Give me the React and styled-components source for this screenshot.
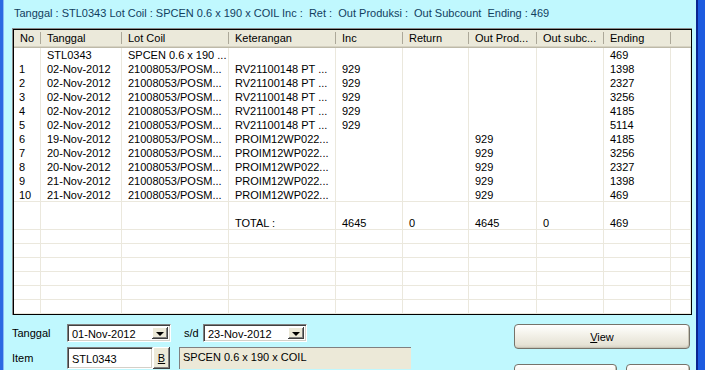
import React from "react";
import styled, { createGlobalStyle } from "styled-components";

const Global = createGlobalStyle`
  html, body { margin: 0; padding: 0; overflow: hidden; }
  body { font-family: "Liberation Sans", Arial, sans-serif; font-size: 11px; }
`;

const Window = styled.div`
  display: flex;
  width: 705px;
  height: 370px;
  overflow: hidden;
  background: #c0f8fe;
`;

const LeftFrame = styled.div`
  width: 3px;
  background: #2c68e2;
  border-right: 1px solid #8ab8f4;
`;

const RightFrame = styled.div`
  width: 7px;
  background: #1d5be0;
  border-left: 2px solid #0a2590;
`;

const Content = styled.div`
  flex: 1;
  display: flex;
  flex-direction: column;
  padding: 6px 4px 0 8px;
  min-width: 0;
`;

const Title = styled.div`
  height: 14px;
  line-height: 14px;
  color: #12405e;
  white-space: pre;
  padding-left: 2px;
`;

const GridFrame = styled.div`
  margin-top: 8px;
  height: 286px;
  flex: none;
  border-top: 1px solid #8c8c8c;
  border-left: 1px solid #8c8c8c;
  display: flex;
`;

const Grid = styled.div`
  flex: 1;
  border: 1px solid #000;
  background: #fff;
  display: flex;
  flex-direction: column;
  overflow: hidden;
`;

const cols = "27px 81px 107px 107px 67px 66px 68px 67px 67px 1fr";

const HeaderRow = styled.div`
  display: grid;
  grid-template-columns: ${cols};
  height: 16px;
  flex: none;
  background: #ebe9da;
  border-bottom: 1px solid #d6d2c2;
  box-shadow: 0 1px 0 #bdb9a8;
  margin-bottom: 1px;
`;

const HeaderCell = styled.div`
  position: relative;
  padding-left: 6px;
  line-height: 16px;
  color: #000;
  white-space: nowrap;
  overflow: hidden;
  &::after {
    content: "";
    position: absolute;
    right: 0;
    top: 2px;
    bottom: 2px;
    width: 1px;
    background: #aca899;
    box-shadow: 1px 0 0 #fff;
    display: ${(p) => (p.$last ? "none" : "block")};
  }
`;

const Row = styled.div`
  display: grid;
  flex: none;
  grid-template-columns: ${cols};
  height: ${(p) => (p.$line ? 13 : 14)}px;
  border-bottom: ${(p) => (p.$line ? "1px solid #ebe8dd" : "none")};
`;

const Cell = styled.div`
  border-right: 1px solid #ebe8dd;
  padding-left: ${(p) => (p.$first ? 5 : 6)}px;
  line-height: 14px;
  color: #000;
  white-space: nowrap;
  overflow: hidden;
`;

const Form = styled.div`
  display: flex;
  justify-content: space-between;
  align-items: flex-start;
  margin-top: 9px;
  padding-right: 2px;
`;

const FormLeft = styled.div`
  display: flex;
  flex-direction: column;
  gap: 5px;
`;

const FormRow = styled.div`
  display: flex;
  align-items: center;
  height: ${(p) => p.$h}px;
`;

const Label = styled.div`
  width: ${(p) => p.$w}px;
  color: #000;
  padding-left: ${(p) => p.$pl || 0}px;
  box-sizing: border-box;
`;

const sunken = `
  box-sizing: border-box;
  border-top: 1px solid #808080;
  border-left: 1px solid #808080;
  border-right: 1px solid #ffffff;
  border-bottom: 1px solid #ffffff;
  box-shadow: inset 1px 1px 0 #404040, inset -1px -1px 0 #d4d0c8;
`;

const Combo = styled.div`
  ${sunken}
  width: 104px;
  height: 18px;
  background: #fff;
  display: flex;
  align-items: stretch;
  padding: 2px;
`;

const ComboText = styled.div`
  flex: 1;
  line-height: 14px;
  padding-left: 2px;
  color: #000;
`;

const DropBtn = styled.div`
  width: 16px;
  background: #ece9d8;
  box-shadow: inset -1px -1px 0 #404040, inset 1px 1px 0 #fff, inset -2px -2px 0 #808080;
  display: flex;
  align-items: center;
  justify-content: center;
  &::before {
    content: "";
    border-left: 4px solid transparent;
    border-right: 4px solid transparent;
    border-top: 4px solid #000;
    margin-top: 1px;
  }
`;

const TextBox = styled.div`
  ${sunken}
  width: 86px;
  height: 22px;
  background: #fff;
  padding: 4px 0 0 4px;
  color: #000;
  line-height: 14px;
`;

const SmallBtn = styled.div`
  box-sizing: border-box;
  width: 17px;
  height: 22px;
  background: #ece9d8;
  box-shadow: inset -1px -1px 0 #404040, inset 1px 1px 0 #fff, inset -2px -2px 0 #808080;
  display: flex;
  align-items: center;
  justify-content: center;
  color: #000;
  text-decoration: underline;
`;

const DescBox = styled.div`
  box-sizing: border-box;
  margin-left: 9px;
  width: 232px;
  height: 22px;
  background: #ece9d8;
  border-top: 1px solid #808080;
  border-left: 1px solid #808080;
  padding: 2px 0 0 3px;
  color: #000;
  line-height: 14px;
`;

const FormRight = styled.div`
  width: 176px;
  display: flex;
  flex-direction: column;
  gap: 15px;
`;

const BtnRow = styled.div`
  display: flex;
  gap: 9px;
`;

const XPButton = styled.div`
  box-sizing: border-box;
  width: ${(p) => (p.$w ? `${p.$w}px` : "100%")};
  flex: none;
  height: 25px;
  border: 1px solid #76736a;
  border-radius: 4px;
  background: linear-gradient(#ffffff 0%, #f4f2ea 40%, #e6e3d6 85%, #d6d1c3 100%);
  box-shadow: inset -1px -1px 0 #c9c5b6;
  display: flex;
  align-items: center;
  justify-content: center;
  color: #000;
  font-size: 11px;
  u { text-decoration: underline; }
`;

const columns = ["No", "Tanggal", "Lot Coil", "Keterangan", "Inc", "Return", "Out Prod...", "Out subc...", "Ending", ""];

const data = [
  ["", "STL0343", "SPCEN 0.6 x 190 ...", "", "", "", "", "", "469"],
  ["1", "02-Nov-2012", "21008053/POSM...", "RV21100148 PT ...", "929", "", "", "", "1398"],
  ["2", "02-Nov-2012", "21008053/POSM...", "RV21100148 PT ...", "929", "", "", "", "2327"],
  ["3", "02-Nov-2012", "21008053/POSM...", "RV21100148 PT ...", "929", "", "", "", "3256"],
  ["4", "02-Nov-2012", "21008053/POSM...", "RV21100148 PT ...", "929", "", "", "", "4185"],
  ["5", "02-Nov-2012", "21008053/POSM...", "RV21100148 PT ...", "929", "", "", "", "5114"],
  ["6", "19-Nov-2012", "21008053/POSM...", "PROIM12WP022...", "", "", "929", "", "4185"],
  ["7", "20-Nov-2012", "21008053/POSM...", "PROIM12WP022...", "", "", "929", "", "3256"],
  ["8", "20-Nov-2012", "21008053/POSM...", "PROIM12WP022...", "", "", "929", "", "2327"],
  ["9", "21-Nov-2012", "21008053/POSM...", "PROIM12WP022...", "", "", "929", "", "1398"],
  ["10", "21-Nov-2012", "21008053/POSM...", "PROIM12WP022...", "", "", "929", "", "469"],
];

const empty = ["", "", "", "", "", "", "", "", ""];
const total = ["", "", "", "TOTAL :", "4645", "0", "4645", "0", "469"];

function GridRow({ cells, line }) {
  return (
    <Row $line={line}>
      {cells.map((c, i) => (
        <Cell key={i} $first={i === 0}>{c}</Cell>
      ))}
      <Cell />
    </Row>
  );
}

export default function App() {
  return (
    <>
      <Global />
      <Window>
        <LeftFrame />
        <Content>
          <Title>{"Tanggal : STL0343 Lot Coil : SPCEN 0.6 x 190 x COIL Inc :  Ret :  Out Produksi :  Out Subcount  Ending : 469"}</Title>
          <GridFrame>
            <Grid>
              <HeaderRow>
                {columns.map((c, i) => (
                  <HeaderCell key={i} $last={i === columns.length - 1}>{c}</HeaderCell>
                ))}
              </HeaderRow>
              {data.map((r, i) => (
                <GridRow key={i} cells={r} line={i === data.length - 1} />
              ))}
              <GridRow cells={empty} />
              <GridRow cells={total} line />
              {Array.from({ length: 7 }).map((_, i) => (
                <GridRow key={"e" + i} cells={empty} line />
              ))}
            </Grid>
          </GridFrame>
          <Form>
            <FormLeft>
              <FormRow $h={18}>
                <Label $w={55}>Tanggal</Label>
                <Combo>
                  <ComboText>01-Nov-2012</ComboText>
                  <DropBtn />
                </Combo>
                <Label $w={32} $pl={13}>s/d</Label>
                <Combo>
                  <ComboText>23-Nov-2012</ComboText>
                  <DropBtn />
                </Combo>
              </FormRow>
              <FormRow $h={22}>
                <Label $w={55}>Item</Label>
                <TextBox>STL0343</TextBox>
                <SmallBtn>B</SmallBtn>
                <DescBox>SPCEN 0.6 x 190 x COIL</DescBox>
              </FormRow>
            </FormLeft>
            <FormRight>
              <XPButton>
                <span><u>V</u>iew</span>
              </XPButton>
              <BtnRow>
                <XPButton $w={103} />
                <XPButton $w={64} />
              </BtnRow>
            </FormRight>
          </Form>
        </Content>
        <RightFrame />
      </Window>
    </>
  );
}
